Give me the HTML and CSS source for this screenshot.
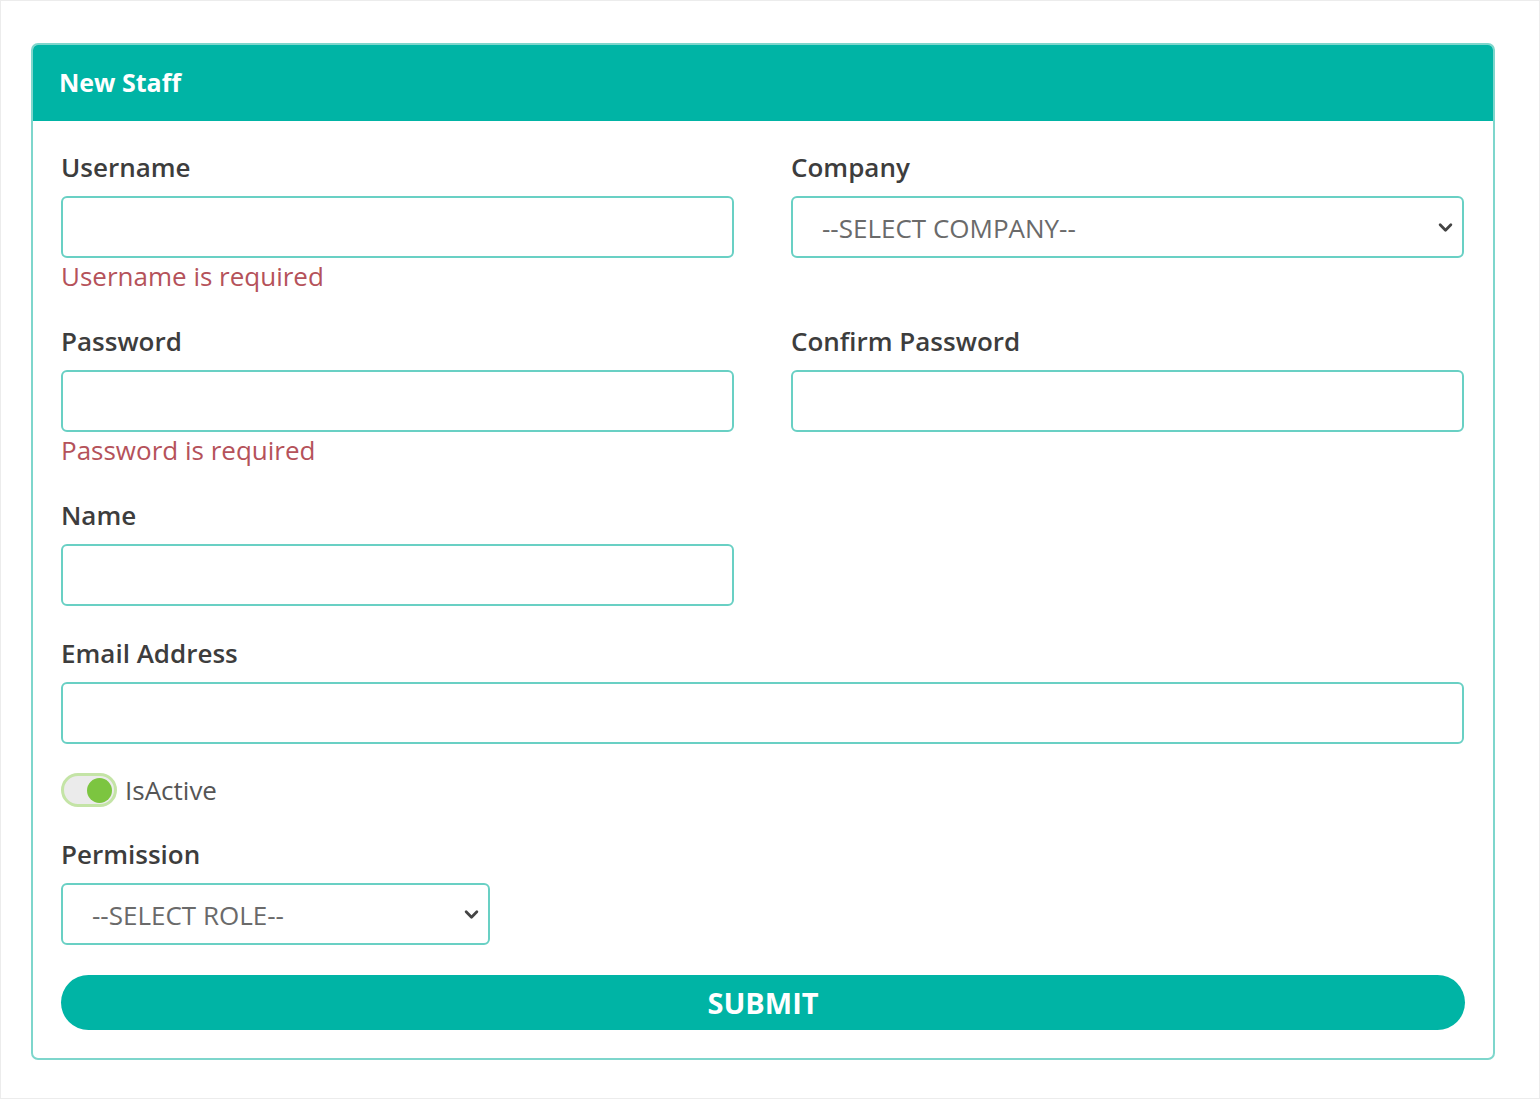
FILE: index.html
```html
<!DOCTYPE html>
<html lang="en">
<head>
<meta charset="utf-8">
<title>New Staff</title>
<link rel="stylesheet" href="styles.css">
</head>
<body>
<div class="frame">
  <div class="card">
    <div class="card-header">New Staff</div>
    <form class="card-body">
      <div class="grid">
        <div class="group">
          <label class="label">Username</label>
          <input class="input" type="text">
          <div class="error">Username is required</div>
        </div>
        <div class="group">
          <label class="label">Company</label>
          <div class="select">
            <span>--SELECT COMPANY--</span>
            <svg class="chev" viewBox="0 0 14 10" width="15" height="11"><path d="M2 2.5 L7 7.5 L12 2.5" fill="none" stroke="#444" stroke-width="2.6" stroke-linecap="round" stroke-linejoin="round"/></svg>
          </div>
        </div>
        <div class="group">
          <label class="label">Password</label>
          <input class="input" type="password">
          <div class="error">Password is required</div>
        </div>
        <div class="group">
          <label class="label">Confirm Password</label>
          <input class="input" type="password">
        </div>
        <div class="group">
          <label class="label">Name</label>
          <input class="input" type="text">
        </div>
        <div class="group"></div>
        <div class="group full">
          <label class="label">Email Address</label>
          <input class="input" type="text">
        </div>
      </div>
      <div class="toggle-row">
        <span class="toggle"><span class="knob"></span></span>
        <span class="toggle-label">IsActive</span>
      </div>
      <div class="group perm">
        <label class="label">Permission</label>
        <div class="select role">
          <span>--SELECT ROLE--</span>
          <svg class="chev" viewBox="0 0 14 10" width="15" height="11"><path d="M2 2.5 L7 7.5 L12 2.5" fill="none" stroke="#444" stroke-width="2.6" stroke-linecap="round" stroke-linejoin="round"/></svg>
        </div>
      </div>
      <button type="button" class="submit">SUBMIT</button>
    </form>
  </div>
</div>
</body>
</html>
```
FILE: styles.css
```css
* { box-sizing: border-box; }
html, body { margin: 0; padding: 0; background: #fff; }
body { font-family: "Open Sans", "Noto Sans", sans-serif; color: #3a3a3a; }

.frame {
  width: 1540px;
  height: 1099px;
  border: 1px solid #ececec;
  padding: 42px 45px 0 30px;
}

.card {
  width: 1464px;
  border: 2px solid #7ed6cc;
  border-radius: 7px;
  overflow: hidden;
}

.card-header {
  background: #00b4a5;
  color: #fff;
  font-weight: 700;
  font-size: 25px;
  height: 78px;
  line-height: 78px;
  padding-left: 28px;
  margin: -2px -2px 0;
  border-radius: 7px 7px 0 0;
}

.card-body {
  padding: 28px 28px 28px;
}

.grid {
  display: grid;
  grid-template-columns: 673px 673px;
  column-gap: 57px;
}
.full { grid-column: 1 / -1; }

.group {
  margin-bottom: 29px;
}
.perm { margin-bottom: 30px; }

.label {
  display: block;
  font-size: 26px;
  font-weight: 600;
  color: #3d3d3d;
  line-height: 36px;
  margin-bottom: 11px;
}

.input, .select {
  display: block;
  width: 100%;
  height: 62px;
  border: 2px solid #69d0c4;
  border-radius: 6px;
  background: #fff;
  font-family: inherit;
  font-size: 26px;
  outline: none;
}

.select {
  display: flex;
  align-items: center;
  justify-content: space-between;
  padding: 0 9px 0 29px;
  color: #6a6a6a;
}
.select span { line-height: 1; margin-top: 2px; }
.chev { display: block; }

.role { width: 429px; }

.error {
  color: #b5525a;
  font-size: 26px;
  line-height: 36px;
}

.toggle-row {
  display: flex;
  align-items: center;
  gap: 8px;
  height: 34px;
  margin-bottom: 29px;
}
.toggle {
  width: 56px;
  height: 34px;
  border-radius: 17px;
  background: #ebebeb;
  border: 3px solid #c4e4a6;
  display: flex;
  align-items: center;
  justify-content: flex-end;
  padding-right: 2px;
}
.knob {
  width: 25px;
  height: 25px;
  border-radius: 50%;
  background: #7cc540;
}
.toggle-label {
  font-size: 26px;
  color: #555;
}

.submit {
  display: block;
  width: 100%;
  height: 55px;
  border: none;
  border-radius: 28px;
  background: #00b4a5;
  color: #fff;
  font-family: inherit;
  font-weight: 700;
  font-size: 29px;
  margin-top: 0;
}
```
